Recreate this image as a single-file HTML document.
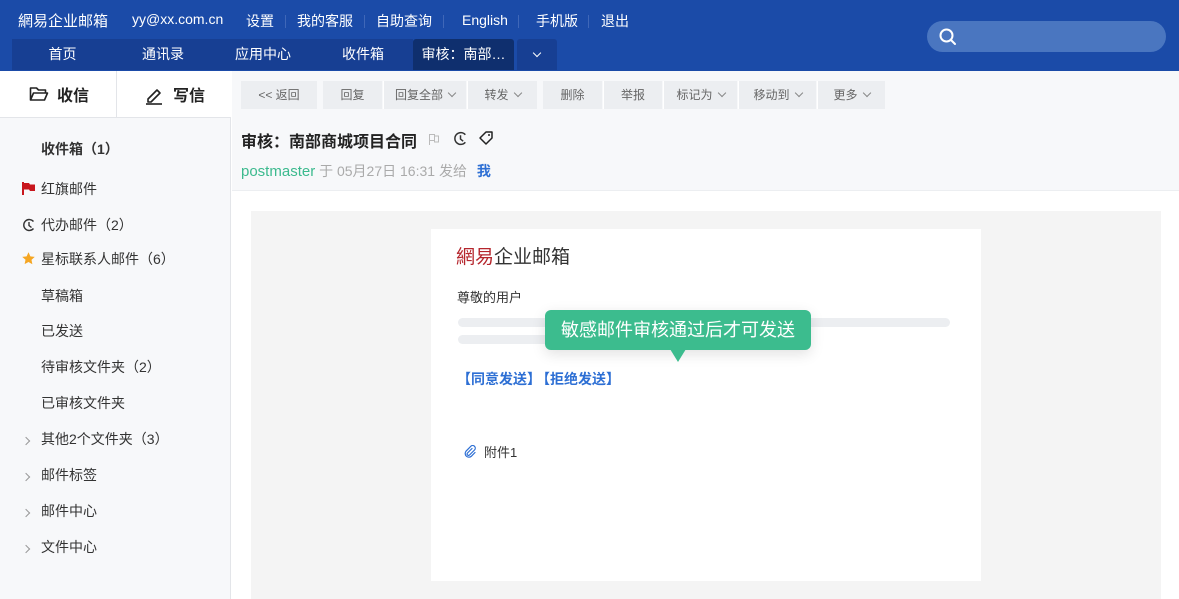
<!DOCTYPE html>
<html><head><meta charset="utf-8"><style>
*{margin:0;padding:0;box-sizing:border-box}
body{width:1179px;height:599px;overflow:hidden;font-family:"Liberation Sans","Noto Sans CJK SC",sans-serif;background:#fff;position:relative;color:#333}
.a{position:absolute}
.hdr{left:0;top:0;width:1179px;height:71px;background:#1b4ba8}
.top{top:11px;color:#fff;font-size:14px;white-space:nowrap}
.sep{top:15px;width:1px;height:13px;background:#3f67b8}
.tab{top:39px;height:31px;background:#173f93;color:#fff;font-size:14px;line-height:31px;text-align:center}
.side{left:0;top:71px;width:231px;height:528px;background:#f7f8fa;border-right:1px solid #e3e5e9}
.si{font-size:14px;color:#333;white-space:nowrap}
.btn{top:81px;height:28px;background:#eceef1;color:#666;font-size:12px;line-height:28px;text-align:center}
.chev{display:inline-block;width:6px;height:6px;border-right:1px solid #888;border-bottom:1px solid #888;transform:rotate(45deg);margin-left:6px;vertical-align:3px}
.arr{display:inline-block;width:6px;height:6px;border-right:1px solid #999;border-top:1px solid #999;transform:rotate(45deg);}
</style></head><body>
<div class="a hdr"></div>
<div class="a top" style="left:18px;font-size:15px;top:10px">網易企业邮箱</div>
<div class="a top" style="left:132px">yy@xx.com.cn</div>
<div class="a top" style="left:246px">设置</div>
<div class="a sep" style="left:285px"></div>
<div class="a top" style="left:297px">我的客服</div>
<div class="a sep" style="left:364px"></div>
<div class="a top" style="left:376px">自助查询</div>
<div class="a sep" style="left:443px"></div>
<div class="a top" style="left:462px;top:12px">English</div>
<div class="a sep" style="left:518px"></div>
<div class="a top" style="left:536px">手机版</div>
<div class="a sep" style="left:588px"></div>
<div class="a top" style="left:601px">退出</div>
<div class="a" style="left:927px;top:21px;width:239px;height:31px;border-radius:16px;background:#4a76c0"></div>
<svg class="a" style="left:938px;top:27px" width="20" height="20" viewBox="0 0 20 20"><circle cx="8.5" cy="8.5" r="6" fill="none" stroke="#fff" stroke-width="2"/><path d="M13 13l4 4" stroke="#fff" stroke-width="2" stroke-linecap="round"/></svg>
<div class="a tab" style="left:12px;width:101px">首页</div>
<div class="a tab" style="left:113px;width:100px">通讯录</div>
<div class="a tab" style="left:213px;width:100px">应用中心</div>
<div class="a tab" style="left:313px;width:100px">收件箱</div>
<div class="a tab" style="left:413px;width:101px;background:#0f2f6e;border-radius:3px 3px 0 0">审核：南部…</div>
<div class="a tab" style="left:517px;width:40px;border-radius:3px 3px 0 0"><span class="chev" style="border-color:#fff;margin:0"></span></div>

<div class="a side"></div>
<div class="a" style="left:0;top:71px;width:231px;height:47px;background:#fff;border-bottom:1px solid #e3e5e9"></div>
<div class="a" style="left:116px;top:71px;width:1px;height:47px;background:#e3e5e9"></div>
<svg class="a" style="left:29px;top:86px" width="20" height="16" viewBox="0 0 20 16"><path d="M1.5 14V2h6l2 2h7v3M1.5 14l3-7h14l-3 7z" fill="none" stroke="#222" stroke-width="1.6" stroke-linejoin="round"/></svg>
<div class="a" style="left:57px;top:82px;font-size:16px;font-weight:bold;color:#222">收信</div>
<svg class="a" style="left:145px;top:85px" width="20" height="20" viewBox="0 0 20 20"><path d="M3 14l9-9 3 3-9 9H3z" fill="none" stroke="#222" stroke-width="1.6" stroke-linejoin="round"/><path d="M1 19h16" stroke="#222" stroke-width="1.6"/></svg>
<div class="a" style="left:173px;top:82px;font-size:16px;font-weight:bold;color:#222">写信</div>
<div class="a si" style="left:41px;top:139px;font-weight:bold">收件箱（1）</div>
<svg class="a" style="left:22px;top:182px" width="14" height="13" viewBox="0 0 14 13"><path d="M1 0v13" stroke="#c8161d" stroke-width="2"/><path d="M2 1h5l1 1.5h5V9H8L7 7.5H2z" fill="#c8161d"/></svg>
<div class="a si" style="left:41px;top:179px">红旗邮件</div>
<svg class="a" style="left:22px;top:218px" width="14" height="14" viewBox="0 0 14 14"><path d="M11.5 10.5A5.5 5.5 0 1 1 11.5 3.5" fill="none" stroke="#333" stroke-width="1.4"/><path d="M7 4v3.5l2.5 2" fill="none" stroke="#333" stroke-width="1.4"/></svg>
<div class="a si" style="left:41px;top:215px">代办邮件（2）</div>
<svg class="a" style="left:21px;top:251px" width="15" height="15" viewBox="0 0 24 24"><path d="M12 2l3 6.5 7 .8-5.2 4.8 1.4 7L12 17.6 5.8 21l1.4-7L2 9.3l7-.8z" fill="#f5a623"/></svg>
<div class="a si" style="left:41px;top:249px">星标联系人邮件（6）</div>
<div class="a si" style="left:41px;top:286px">草稿箱</div>
<div class="a si" style="left:41px;top:321px">已发送</div>
<div class="a si" style="left:41px;top:357px">待审核文件夹（2）</div>
<div class="a si" style="left:41px;top:393px">已审核文件夹</div>
<div class="a" style="left:23px;top:431px"><span class="arr"></span></div><div class="a si" style="left:41px;top:429px">其他2个文件夹（3）</div>
<div class="a" style="left:23px;top:467px"><span class="arr"></span></div><div class="a si" style="left:41px;top:465px">邮件标签</div>
<div class="a" style="left:23px;top:503px"><span class="arr"></span></div><div class="a si" style="left:41px;top:501px">邮件中心</div>
<div class="a" style="left:23px;top:539px"><span class="arr"></span></div><div class="a si" style="left:41px;top:537px">文件中心</div>

<div class="a" style="left:232px;top:71px;width:947px;height:120px;background:#f7f8fa;border-bottom:1px solid #eceef1"></div>
<div class="a btn" style="left:241px;width:76px">&lt;&lt; 返回</div>
<div class="a btn" style="left:323px;width:59px">回复</div>
<div class="a btn" style="left:383px;width:83px;border-left:1px solid #fff">回复全部<span class="chev"></span></div>
<div class="a btn" style="left:467px;width:70px;border-left:1px solid #fff">转发<span class="chev"></span></div>
<div class="a btn" style="left:543px;width:59px">删除</div>
<div class="a btn" style="left:603px;width:59px;border-left:1px solid #fff">举报</div>
<div class="a btn" style="left:663px;width:74px;border-left:1px solid #fff">标记为<span class="chev"></span></div>
<div class="a btn" style="left:738px;width:78px;border-left:1px solid #fff">移动到<span class="chev"></span></div>
<div class="a btn" style="left:817px;width:68px;border-left:1px solid #fff">更多<span class="chev"></span></div>
<div class="a" style="left:241px;top:128px;font-size:16px;font-weight:bold;color:#222;white-space:nowrap">审核：南部商城项目合同</div>
<svg class="a" style="left:428px;top:133px" width="12" height="12" viewBox="0 0 12 12"><path d="M1.5 1v11M1.5 1.5h5v6h-5M6.5 3h4v6h-4z" fill="none" stroke="#bbb" stroke-width="1"/></svg>
<svg class="a" style="left:453px;top:131px" width="15" height="15" viewBox="0 0 14 14"><path d="M11.5 10.5A5.5 5.5 0 1 1 11.5 3.5" fill="none" stroke="#333" stroke-width="1.4"/><path d="M7 4v3.5l2.5 2" fill="none" stroke="#333" stroke-width="1.4"/></svg>
<svg class="a" style="left:478px;top:130px" width="16" height="16" viewBox="0 0 16 16"><path d="M8 2h6v6l-6 6-6-6z" fill="none" stroke="#222" stroke-width="1.5" stroke-linejoin="round"/><circle cx="11" cy="5" r="1" fill="#222"/></svg>
<div class="a" style="left:241px;top:161px;font-size:14px;color:#aaa;white-space:nowrap"><span style="color:#3cba8e;font-size:15px">postmaster</span> 于 05月27日 16:31 发给 <span style="color:#2d6fd4;font-weight:bold;margin-left:6px">我</span></div>

<div class="a" style="left:251px;top:211px;width:910px;height:388px;background:#f4f4f4"></div>
<div class="a" style="left:431px;top:229px;width:550px;height:352px;background:#fff"></div>
<div class="a" style="left:456px;top:242px;font-size:19px;color:#333;white-space:nowrap"><span style="color:#b5262d">網易</span>企业邮箱</div>
<div class="a" style="left:457px;top:287px;font-size:13px;color:#333">尊敬的用户</div>
<div class="a" style="left:458px;top:318px;width:492px;height:9px;border-radius:5px;background:#eceef1"></div>
<div class="a" style="left:458px;top:335px;width:300px;height:9px;border-radius:5px;background:#eceef1"></div>
<div class="a" style="left:545px;top:310px;width:266px;height:40px;border-radius:6px;background:#3cbc8e;color:#fff;font-size:18px;line-height:40px;text-align:center;box-shadow:0 4px 14px rgba(0,0,0,.12)">敏感邮件审核通过后才可发送</div>
<div class="a" style="left:670px;top:349px;width:0;height:0;border-left:8px solid transparent;border-right:8px solid transparent;border-top:13px solid #3cbc8e"></div>
<div class="a" style="left:457px;top:369px;font-size:14px;color:#2d6fd4;font-weight:bold;white-space:nowrap">【同意发送】<span style="margin-left:2px">【拒绝发送】</span></div>
<svg class="a" style="left:464px;top:445px" width="13" height="13" viewBox="0 0 13 13"><path d="M8 3.5L3.5 8a1.4 1.4 0 0 0 2 2L10.5 5a2.6 2.6 0 0 0-3.7-3.7L2 6.2a3.7 3.7 0 0 0 5.2 5.2L11 7.5" fill="none" stroke="#2d6fd4" stroke-width="1.2" stroke-linecap="round"/></svg>
<div class="a" style="left:484px;top:442px;font-size:13px;color:#333">附件1</div>
</body></html>
